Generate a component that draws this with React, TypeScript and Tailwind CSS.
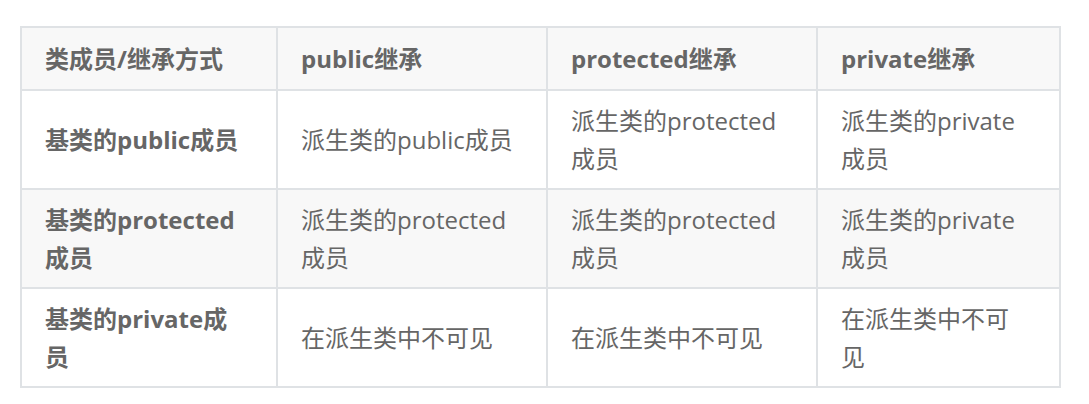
import React from 'react';

const header = ['类成员/继承方式', 'public继承', 'protected继承', 'private继承'];

const rows = [
  ['基类的public成员', '派生类的public成员', '派生类的protected成员', '派生类的private成员'],
  ['基类的protected成员', '派生类的protected成员', '派生类的protected成员', '派生类的private成员'],
  ['基类的private成员', '在派生类中不可见', '在派生类中不可见', '在派生类中不可见'],
];

const App: React.FC = () => {
  return (
    <div
      className="w-[1089px] h-[404px] bg-white pt-[26px] pl-[20px]"
      style={{ fontFamily: '"Open Sans", "Noto Sans CJK SC", sans-serif' }}
    >
      <table className="table-fixed border-collapse w-[1039px] text-[24px] leading-[38px] text-[#666]">
        <colgroup>
          <col className="w-[256px]" />
          <col className="w-[270px]" />
          <col className="w-[270px]" />
          <col className="w-[243px]" />
        </colgroup>
        <thead>
          <tr className="bg-[#f8f8f8]">
            {header.map(h => (
              <th
                key={h}
                className="border-2 border-[#dfe2e5] pl-[23px] pr-[30px] py-[11.5px] text-left font-bold align-middle"
              >
                {h}
              </th>
            ))}
          </tr>
        </thead>
        <tbody>
          {rows.map((row, i) => (
            <tr key={i} className={i === 1 ? 'bg-[#f8f8f8]' : 'bg-white'}>
              {row.map((cell, j) => (
                <td
                  key={j}
                  className={`border-2 border-[#dfe2e5] pl-[23px] pr-[30px] py-[10.5px] align-middle ${
                    j === 0 ? 'font-bold' : ''
                  }`}
                >
                  {cell}
                </td>
              ))}
            </tr>
          ))}
        </tbody>
      </table>
    </div>
  );
};

export default App;
